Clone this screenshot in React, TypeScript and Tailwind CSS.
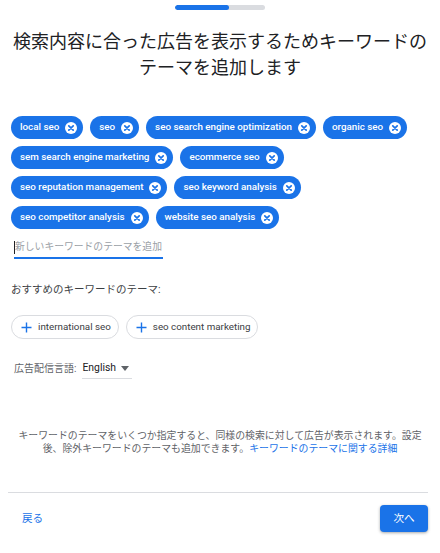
import { useState } from 'react';

const themes = [
  'local seo',
  'seo',
  'seo search engine optimization',
  'organic seo',
  'sem search engine marketing',
  'ecommerce seo',
  'seo reputation management',
  'seo keyword analysis',
  'seo competitor analysis',
  'website seo analysis',
];

const suggestions = ['international seo', 'seo content marketing'];

function RemoveIcon() {
  return (
    <svg width="12" height="12" viewBox="0 0 12 12" className="shrink-0">
      <circle cx="6" cy="6" r="6" fill="#ffffff" />
      <path d="M3.8 3.8 L8.2 8.2 M8.2 3.8 L3.8 8.2" stroke="#1a73e8" strokeWidth="1.7" strokeLinecap="round" />
    </svg>
  );
}

function PlusIcon() {
  return (
    <svg width="11" height="11" viewBox="0 0 11 11" className="shrink-0">
      <path d="M5.5 0.5 V10.5 M0.5 5.5 H10.5" stroke="#1a73e8" strokeWidth="1.4" />
    </svg>
  );
}

export default function App() {
  const [chips] = useState(themes);

  return (
    <div className="w-[440px] h-[553px] bg-white text-[#3c4043] pt-[5px] font-['Roboto','Noto_Sans_CJK_JP',sans-serif]">
      {/* progress */}
      <div className="mx-auto w-[90px] h-[5px] rounded-full bg-[#dadce0] overflow-hidden">
        <div className="w-[54px] h-full rounded-full bg-[#1a73e8]" />
      </div>

      <h1 className="mt-[19px] text-center text-[18px] leading-[26px] font-normal text-[#202124]">
        検索内容に合った広告を表示するためキーワードの
        <br />
        テーマを追加します
      </h1>

      <div className="mt-[35px] px-[11px] flex flex-wrap gap-[7px]">
        {chips.map((c) => (
          <div
            key={c}
            className="h-[23px] flex items-center gap-[6px] pl-[9px] pr-[6px] rounded-full bg-[#1a73e8] text-white text-[9.8px] font-medium"
          >
            <span>{c}</span>
            <RemoveIcon />
          </div>
        ))}
      </div>

      <div className="mt-[8px] ml-[14px] w-[149px] h-[22px] border-b-2 border-[#1a73e8] flex items-center">
        <span className="w-px h-[13px] bg-[#202124]" />
        <span className="text-[9.8px] text-[#9aa0a6]">新しいキーワードのテーマを追加</span>
      </div>

      <p className="mt-[23px] ml-[11px] text-[10.5px] leading-[16px]">おすすめのキーワードのテーマ:</p>

      <div className="mt-[17px] ml-[11px] flex gap-[7px]">
        {suggestions.map((s) => (
          <div
            key={s}
            className="h-[24px] flex items-center gap-[6px] pl-[9px] pr-[7px] rounded-full border border-[#dadce0] text-[9.8px] text-[#3c4043]"
          >
            <PlusIcon />
            <span>{s}</span>
          </div>
        ))}
      </div>

      <div className="mt-[19px] ml-[14px] flex items-center gap-[6px] text-[10px]">
        <span className="text-[#5f6368]">広告配信言語:</span>
        <div className="h-[21px] w-[50px] border-b border-[#dadce0] flex items-center gap-[5px] text-[#202124]">
          <span className="text-[10.4px]">English</span>
          <span className="w-0 h-0 border-l-[4.5px] border-r-[4.5px] border-t-[5px] border-l-transparent border-r-transparent border-t-[#5f6368]" />
        </div>
      </div>

      <p className="mt-[50px] text-center text-[9.9px] leading-[13px] text-[#5f6368]">
        キーワードのテーマをいくつか指定すると、同様の検索に対して広告が表示されます。設定
        <br />
        後、除外キーワードのテーマも追加できます。
        <a href="#" className="text-[#1a73e8]">キーワードのテーマに関する詳細</a>
      </p>

      <div className="mt-[37px] mx-[8px] w-[420px] border-t border-[#dadce0]" />

      <div className="mt-[12px] flex items-center justify-between pl-[22px] pr-[12px]">
        <button className="text-[10.6px] text-[#1a73e8]">戻る</button>
        <button className="w-[48px] h-[27px] rounded-[4px] bg-[#1a73e8] text-white text-[10.6px] shadow-[0_1px_3px_rgba(60,64,67,0.45)]">
          次へ
        </button>
      </div>
    </div>
  );
}
